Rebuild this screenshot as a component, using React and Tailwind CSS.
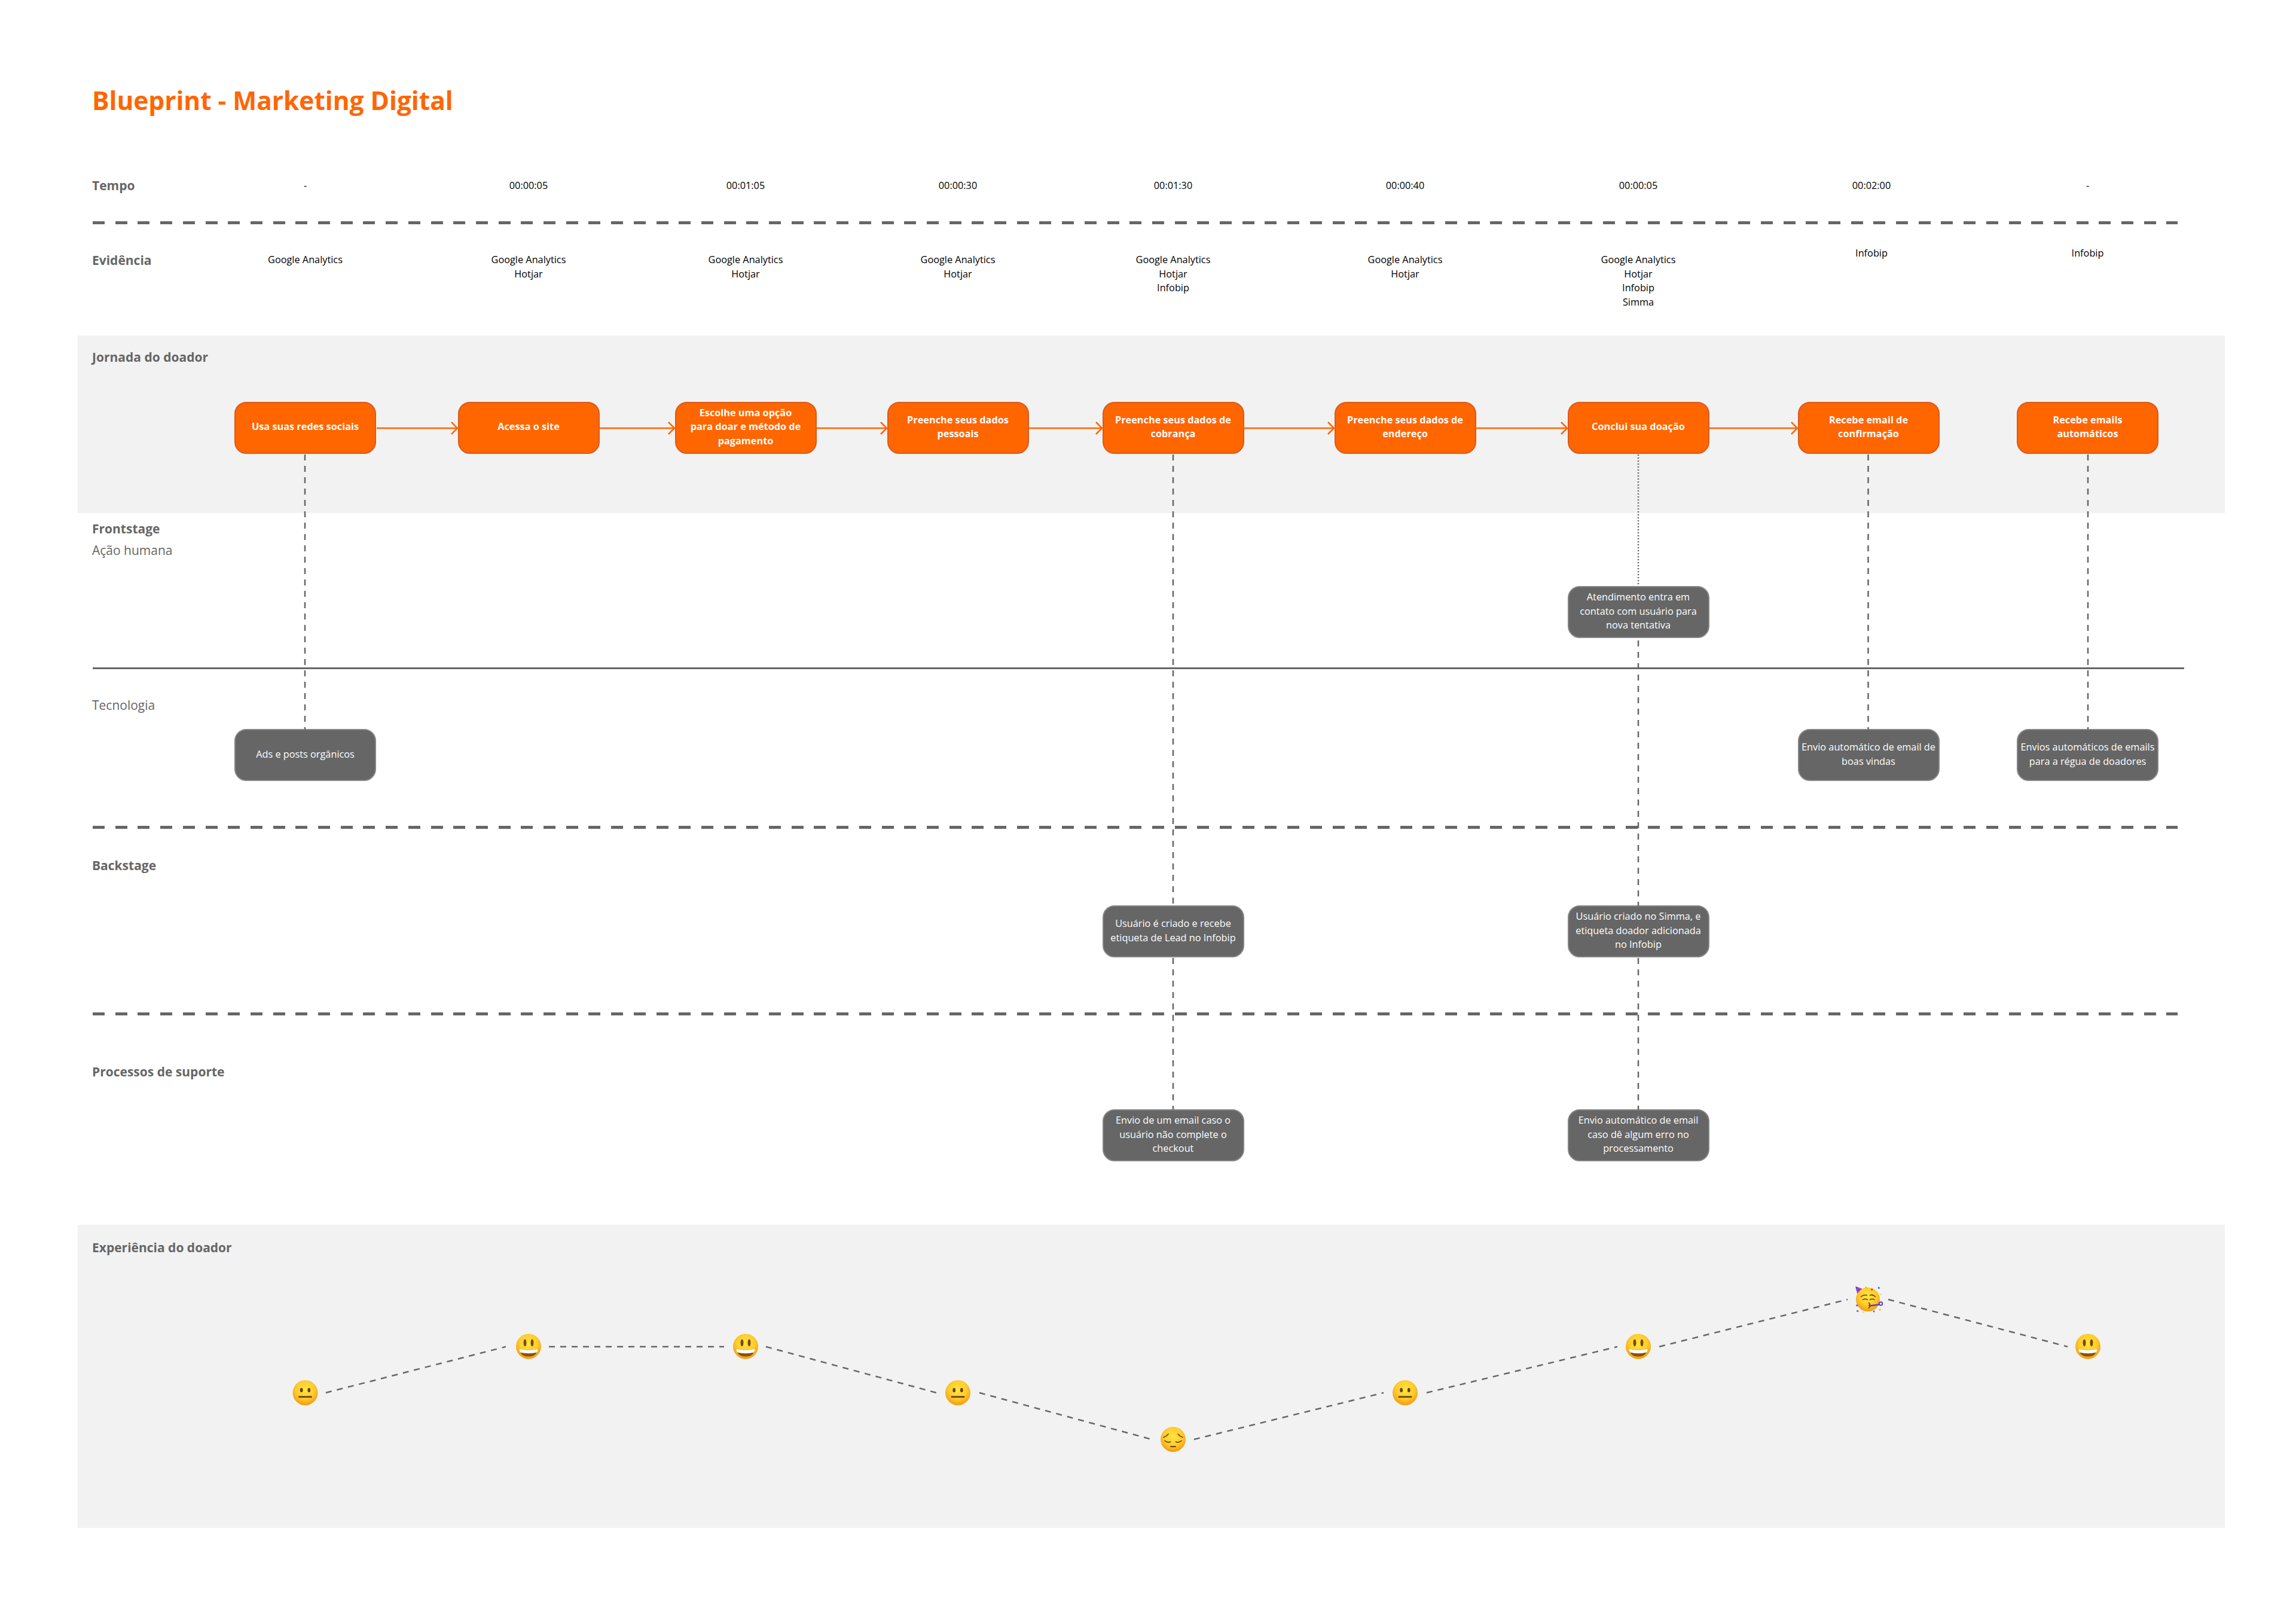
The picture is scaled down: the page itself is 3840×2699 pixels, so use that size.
import React from 'react';

// posição horizontal de cada coluna: todos os cards têm 237px
const gridCols = 'grid grid-cols-[392px_373.5px_363px_355px_360px_388px_390px_385px_366.5px_237px]';
const CENTERS = [510.5, 884, 1247, 1602, 1962, 2350, 2740, 3124, 3492];
const COL_START = ['col-start-2', 'col-start-3', 'col-start-4', 'col-start-5', 'col-start-6', 'col-start-7', 'col-start-8', 'col-start-9', 'col-start-10'];

const tempos = ['-', '00:00:05', '00:01:05', '00:00:30', '00:01:30', '00:00:40', '00:00:05', '00:02:00', '-'];
const evidencias = [
  ['Google Analytics'],
  ['Google Analytics', 'Hotjar'],
  ['Google Analytics', 'Hotjar'],
  ['Google Analytics', 'Hotjar'],
  ['Google Analytics', 'Hotjar', 'Infobip'],
  ['Google Analytics', 'Hotjar'],
  ['Google Analytics', 'Hotjar', 'Infobip', 'Simma'],
  ['Infobip'],
  ['Infobip'],
];
const jornada = [
  'Usa suas redes sociais',
  'Acessa o site',
  'Escolhe uma opção para doar e método de pagamento',
  'Preenche seus dados pessoais',
  'Preenche seus dados de cobrança',
  'Preenche seus dados de endereço',
  'Conclui sua doação',
  'Recebe email de confirmação',
  'Recebe emails automáticos',
];

const Label = ({ children, className = '' }) => (
  <div className={`col-start-1 row-start-1 pl-[154px] text-[21px] leading-[28px] font-bold text-[#666666] whitespace-nowrap ${className}`}>
    {children}
  </div>
);

const Card = ({ col, className = '', children }) => (
  <div className={`${COL_START[col]} row-start-1 w-[237px] h-[87px] rounded-[20px] bg-[#666666] border-2 border-[#858585] flex items-center justify-center px-[3px] pb-[2px] text-center text-[16.3px] leading-[23.5px] text-white ${className}`}>
    {children}
  </div>
);

const Dashes = () => (
  <div className="pl-[155px]">
    <div className="w-[3487px] h-[5px] bg-[repeating-linear-gradient(90deg,#666666_0,#666666_20px,transparent_20px,transparent_37.7px)]" />
  </div>
);

// ---- emojis ----
const Face = ({ id, r = 21, children }) => (
  <>
    <defs>
      <radialGradient id={id} cx="50%" cy="38%" r="62%">
        <stop offset="0%" stopColor="#ffe544" />
        <stop offset="58%" stopColor="#ffcc2e" />
        <stop offset="100%" stopColor="#f39a12" />
      </radialGradient>
    </defs>
    <circle cx="0" cy="0" r={r} fill={`url(#${id})`} />
    {children}
  </>
);

const Smile = ({ id }) => (
  <Face id={id}>
    <ellipse cx="-6" cy="-6" rx="2.5" ry="6" fill="#7a4a00" />
    <ellipse cx="6" cy="-6" rx="2.5" ry="6" fill="#7a4a00" />
    <path d="M-15.5 4 Q0 8.5 15.5 4 Q14 17 0 17 Q-14 17 -15.5 4Z" fill="#8a5200" />
    <path d="M-15.5 4 Q0 8.5 15.5 4 Q15.5 8 14 10 Q0 13.5 -14 10 Q-15.5 8 -15.5 4Z" fill="#ffffff" />
  </Face>
);

const Neutral = ({ id }) => (
  <Face id={id}>
    <ellipse cx="-6.3" cy="-4.3" rx="2.4" ry="3.6" fill="#6b4000" />
    <ellipse cx="6.3" cy="-4.3" rx="2.4" ry="3.6" fill="#6b4000" />
    <rect x="-11.3" y="5.5" width="22.6" height="2.8" rx="0.8" fill="#6b4000" />
  </Face>
);

const Pensive = ({ id }) => (
  <Face id={id}>
    <g fill="none" stroke="#6b4000" strokeWidth="1.6" strokeLinecap="round">
      <path d="M-16 -3.5 Q-11 -5 -8 -9" />
      <path d="M16 -3.5 Q11 -5 8 -9" />
      <path d="M-14 2 Q-9.5 6.5 -4.5 4" />
      <path d="M14 2 Q9.5 6.5 4.5 4" />
      <path d="M-4 12 H4" strokeWidth="2" />
    </g>
  </Face>
);

const Party = ({ id }) => (
  <>
    <path d="M-21 -22 L-9 -17.5 L-16.7 -7Z" fill="#6a3fd0" />
    <path d="M-20 -16 L-13 -19 M-18.5 -11 L-10.5 -15" stroke="#ef3f8f" strokeWidth="1.8" />
    <Face id={id} r={20}>
      <g fill="none" stroke="#6b4000" strokeWidth="1.5" strokeLinecap="round">
        <path d="M-11.5 -4.5 Q-6.5 -9 -1.5 -7" />
        <path d="M12.5 -4.5 Q8 -9 3.5 -7" />
        <path d="M-8.5 0.5 Q-5 -2 -0.5 0.5" />
        <path d="M11 0.5 Q7.5 -2 3.5 0.5" />
        <path d="M1.5 6 Q5 8 2 10 Q5 12 1.5 14" strokeWidth="1.7" />
      </g>
    </Face>
    <path d="M4 10.5 L19 8.5" stroke="#5c44b8" strokeWidth="2.6" strokeLinecap="round" />
    <circle cx="21.5" cy="7" r="2.8" fill="none" stroke="#5c44b8" strokeWidth="2" />
    <circle cx="18.3" cy="-19.3" r="1.6" fill="#2f6bdc" />
    <circle cx="6.7" cy="-16.7" r="1.6" fill="#d92f5e" />
    <circle cx="-3.3" cy="-20" r="1.5" fill="#ffb300" />
    <circle cx="-18.3" cy="10" r="1.6" fill="#2f6bdc" />
    <circle cx="-17.3" cy="19.3" r="1.6" fill="#d92f5e" />
    <circle cx="-7.3" cy="21" r="1.4" fill="#ffd83b" />
    <circle cx="10" cy="20" r="1.4" fill="#2f6bdc" />
    <circle cx="20" cy="17.3" r="1.5" fill="#ffb300" />
    <circle cx="21.7" cy="-8.3" r="1.4" fill="#ffd83b" />
  </>
);

// ---- traços sobre o quadro ----
const vertical = [
  [510, 760, 1220],
  [1962, 760, 1515],
  [1962, 1602, 1856],
  [2740, 1071, 1515],
  [2740, 1602, 1856],
  [3124.5, 760, 1220],
  [3492, 760, 1220],
];
const arrows = [
  [630, 765],
  [1003, 1128],
  [1366, 1483],
  [1721, 1843],
  [2081, 2231],
  [2469, 2621],
  [2859, 3006],
];
const curve = [
  [545, 2329, 846, 2252],
  [918, 2252, 1211, 2252],
  [1281, 2252, 1566, 2329],
  [1638, 2329, 1926, 2407],
  [1997, 2407, 2314, 2329],
  [2386, 2329, 2705, 2252],
  [2775, 2252, 3090, 2173],
  [3158, 2173, 3458, 2252],
];
const emojis = [
  [Neutral, 2329],
  [Smile, 2251.5],
  [Smile, 2251.5],
  [Neutral, 2329],
  [Pensive, 2407],
  [Neutral, 2329],
  [Smile, 2251.5],
  [Party, 2173],
  [Smile, 2251.5],
];

const Overlay = () => (
  <svg className="absolute inset-0 pointer-events-none" width="3840" height="2699" viewBox="0 0 3840 2699">
    {vertical.map(([x, y1, y2], i) => (
      <line key={i} x1={x} y1={y1} x2={x} y2={y2} stroke="#666666" strokeWidth="2.5" strokeDasharray="10 9" />
    ))}
    <line x1="2740" y1="760" x2="2740" y2="980" stroke="#666666" strokeWidth="2.5" strokeDasharray="2 3" />
    {arrows.map(([x1, x2], i) => (
      <g key={i} fill="none" stroke="#ff6600" strokeWidth="2.5">
        <line x1={x1} y1="716" x2={x2} y2="716" />
        <path d={`M${x2 - 10} 706 L${x2} 716 L${x2 - 10} 726`} />
      </g>
    ))}
    {curve.map(([x1, y1, x2, y2], i) => (
      <line key={i} x1={x1} y1={y1} x2={x2} y2={y2} stroke="#666666" strokeWidth="2.5" strokeDasharray="10 9" />
    ))}
    {emojis.map(([Emoji, y], i) => (
      <g key={i} transform={`translate(${CENTERS[i]} ${y})`}>
        <Emoji id={`face-${i}`} />
      </g>
    ))}
  </svg>
);

export default function App() {
  return (
    <div className="relative w-[3840px] h-[2699px] bg-white font-['Open_Sans',sans-serif] text-black overflow-hidden">
      {/* Título */}
      <div className="pt-[138px] pl-[154px] h-[290px]">
        <h1 className="text-[42.4px] leading-[60px] font-bold text-[#ff6600]">Blueprint - Marketing Digital</h1>
      </div>

      {/* Tempo */}
      <div className={`${gridCols} h-[80px] items-start`}>
        <Label className="mt-[6px]">Tempo</Label>
        {tempos.map((t, i) => (
          <div key={i} className={`${COL_START[i]} row-start-1 w-[237px] mt-[8px] text-center text-[16.3px] leading-[24px] ${i === 7 ? 'pl-[10px]' : ''}`}>
            {t}
          </div>
        ))}
      </div>

      <Dashes />

      {/* Evidência */}
      <div className={`${gridCols} h-[186px] pt-[48px]`}>
        <Label className="-mt-[2px]">Evidência</Label>
        {evidencias.map((lines, i) => (
          <div key={i} className={`${COL_START[i]} row-start-1 w-[237px] text-center text-[16.3px] leading-[23.7px] ${i === 7 ? '-mt-[11px] pl-[10px]' : ''} ${i === 8 ? '-mt-[11px]' : ''}`}>
            {lines.map((l) => (
              <div key={l}>{l}</div>
            ))}
          </div>
        ))}
      </div>

      {/* Jornada do doador */}
      <section className="ml-[130px] w-[3591px] h-[297px] bg-[#f2f2f2]">
        <div className="pt-[22px] pl-[24px] text-[21px] leading-[28px] font-bold text-[#666666]">Jornada do doador</div>
        <div className={`${gridCols} -ml-[130px] w-[3840px] mt-[61px]`}>
          {jornada.map((t, i) => (
            <div key={i} className={`${COL_START[i]} row-start-1 w-[237px] h-[87px] rounded-[20px] bg-[#ff6600] border-2 border-[#d95a1e] flex items-center justify-center ${i === 2 ? 'px-[20px]' : 'px-[14px]'} pb-[3px] text-center text-[16.3px] leading-[23.5px] font-bold text-white`}>
              {t}
            </div>
          ))}
        </div>
      </section>

      {/* Frontstage */}
      <div className={`${gridCols} h-[258px] pt-[12px]`}>
        <div className="col-start-1 row-start-1 pl-[154px] text-[21px] leading-[28px] text-[#666666] whitespace-nowrap">
          <div className="font-bold">Frontstage</div>
          <div className="mt-[8px]">Ação humana</div>
        </div>
        <Card col={6} className="mt-[110px]">Atendimento entra em contato com usuário para nova tentativa</Card>
      </div>
      <div className="pl-[155px]">
        <div className="w-[3498px] h-[3px] bg-[#666666]" />
      </div>

      {/* Tecnologia */}
      <div className={`${gridCols} h-[262px] pt-[46px]`}>
        <Label className="font-normal!">Tecnologia</Label>
        <Card col={0} className="mt-[54px]">Ads e posts orgânicos</Card>
        <Card col={7} className="mt-[54px]">Envio automático de email de boas vindas</Card>
        <Card col={8} className="mt-[54px]">Envios automáticos de emails para a régua de doadores</Card>
      </div>

      <Dashes />

      {/* Backstage */}
      <div className={`${gridCols} h-[307px] pt-[47px]`}>
        <Label>Backstage</Label>
        <Card col={4} className="mt-[81px]">Usuário é criado e recebe etiqueta de Lead no Infobip</Card>
        <Card col={6} className="mt-[81px]">Usuário criado no Simma, e etiqueta doador adicionada no Infobip</Card>
      </div>

      <Dashes />

      {/* Processos de suporte */}
      <div className={`${gridCols} h-[350px] pt-[80px]`}>
        <Label>Processos de suporte</Label>
        <Card col={4} className="mt-[77px]">Envio de um email caso o usuário não complete o checkout</Card>
        <Card col={6} className="mt-[77px]">Envio automático de email caso dê algum erro no processamento</Card>
      </div>

      {/* Experiência do doador */}
      <section className="ml-[130px] w-[3591px] h-[507px] bg-[#f2f2f2] pt-[24px] pl-[24px] text-[21px] leading-[28px] font-bold text-[#666666]">
        Experiência do doador
      </section>

      <Overlay />
    </div>
  );
}
